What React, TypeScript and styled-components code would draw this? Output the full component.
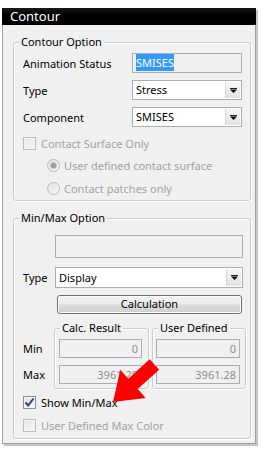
import React from 'react'
import styled, { createGlobalStyle } from 'styled-components'


const PANEL_BG = '#f0f0f0'
const FIELD_BORDER = '#abadb3'
const DISABLED_TEXT = '#a2a2a2'


const GlobalStyle = createGlobalStyle`
  html, body {
    margin: 0;
    padding: 0;
    background: #fff;
  }
  body {
    font-family: "Noto Sans", "Open Sans", sans-serif;
    font-size: 11px;
    color: #000;
  }
`


const Page = styled.div`
  position: relative;
  width: 261px;
  height: 451px;
  padding: 8px 0 0 2px;
  box-sizing: border-box;
  overflow: hidden;
`

const Window = styled.div`
  width: 254px;
  box-sizing: border-box;
  border: 1px solid #9aa0a6;
  border-top: none;
  box-shadow: 2px 2px 1px rgba(0, 0, 0, 0.22);
`

const TitleBar = styled.div`
  height: 17px;
  margin: 0 -1px;
  padding-left: 8px;
  background: linear-gradient(#1a1a1a, #000 40%, #000);
  color: #fff;
  font-size: 13px;
  line-height: 17px;
`

const Body = styled.div`
  display: flex;
  flex-direction: column;
  gap: 17px;
  padding: 17px 4px 4px 10px;
  background: ${PANEL_BG};
`


const Group = styled.div<{ $padding: string }>`
  position: relative;
  display: flex;
  flex-direction: column;
  padding: ${p => p.$padding};
  border: 1px solid #c3ccd4;
  border-radius: 3px;
  box-shadow: inset 1px 1px 0 #fff, 1px 1px 0 #fff;
`

const Legend = styled.span`
  position: absolute;
  top: -9px;
  left: 5px;
  padding: 0 2px;
  background: ${PANEL_BG};
  line-height: 16px;
  white-space: nowrap;
`


const FormRow = styled.div<{ $cols: string, $height: number, $gap?: number }>`
  display: grid;
  grid-template-columns: ${p => p.$cols};
  align-items: center;
  height: ${p => p.$height}px;
  margin-top: ${p => p.$gap || 0}px;
`

const Label = styled.span`
  white-space: nowrap;
`


const TextBox = styled.div<{ $height: number, $align?: string, $offset?: number }>`
  height: ${p => p.$height}px;
  margin-left: ${p => p.$offset || 0}px;
  box-sizing: border-box;
  padding: 0 3px;
  border: 1px solid ${FIELD_BORDER};
  background: ${PANEL_BG};
  color: #8c8c8c;
  line-height: ${p => p.$height - 2}px;
  text-align: ${p => p.$align || 'left'};
`

const Selected = styled.span`
  background: #3399ff;
  color: #fff;
  padding: 1px 0;
`


const ComboBox = styled.div<{ $height: number }>`
  display: flex;
  height: ${p => p.$height}px;
  box-sizing: border-box;
  border: 1px solid ${FIELD_BORDER};
  background: #fff;
`

const ComboValue = styled.span<{ $height: number }>`
  flex: 1;
  padding-left: 3px;
  line-height: ${p => p.$height - 2}px;
`

const ComboButton = styled.span`
  display: flex;
  align-items: center;
  justify-content: center;
  width: 14px;
  margin: 1px;
  border-left: 1px solid #d6d6d6;
  background: linear-gradient(#f6f6f6, #e2e2e2);
`

const Combo: React.FC<{ value: string, height: number }> = function ({ value, height }) {
  return (
    <ComboBox $height={height}>
      <ComboValue $height={height}>{value}</ComboValue>
      <ComboButton>
        <svg width="7" height="5" viewBox="0 0 7 5">
          <rect x="0" y="0" width="7" height="1" fill="#222" />
          <polygon points="0,1.5 7,1.5 3.5,5" fill="#000" />
        </svg>
      </ComboButton>
    </ComboBox>
  )
}


const CheckRow = styled.div<{ $indent?: number, $gap?: number, $disabled?: boolean }>`
  display: flex;
  align-items: center;
  height: 16px;
  margin-top: ${p => p.$gap || 0}px;
  padding-left: ${p => p.$indent || 0}px;
  color: ${p => p.$disabled ? DISABLED_TEXT : '#000'};
  white-space: nowrap;
`

const CheckBox = styled.span<{ $disabled?: boolean }>`
  display: flex;
  align-items: center;
  justify-content: center;
  width: 13px;
  height: 13px;
  margin-right: 5px;
  box-sizing: border-box;
  border: 1px solid ${p => p.$disabled ? '#bcbcbc' : '#8e8f8f'};
  background: ${p => p.$disabled
    ? 'linear-gradient(135deg, #e6e6e6, #f7f7f7)'
    : 'linear-gradient(135deg, #dcdcdc, #fdfdfd)'};
  box-shadow: inset 0 0 0 1px ${p => p.$disabled ? '#f2f2f2' : '#f4f4f4'};
`

const Radio = styled.span<{ $on?: boolean }>`
  display: flex;
  align-items: center;
  justify-content: center;
  width: 13px;
  height: 13px;
  margin-right: 4px;
  box-sizing: border-box;
  border: 1px solid #b9b9b9;
  border-radius: 50%;
  background: linear-gradient(135deg, #e4e4e4, #f8f8f8);

  &::after {
    content: '';
    display: ${p => p.$on ? 'block' : 'none'};
    width: 5px;
    height: 5px;
    border-radius: 50%;
    background: #9a9a9a;
    box-shadow: 0 0 0 1px #c8c8c8;
  }
`


const Button = styled.div`
  height: 19px;
  margin: 7px 1px 0 34px;
  box-sizing: border-box;
  border: 1px solid #707070;
  border-radius: 3px;
  background: linear-gradient(#f2f2f2 0%, #ebebeb 48%, #dddddd 52%, #cfcfcf 100%);
  box-shadow: inset 0 0 0 1px #fcfcfc;
  text-align: center;
  line-height: 16px;
`


const ResultRow = styled.div`
  display: grid;
  grid-template-columns: 28px 95px 94px;
  column-gap: 3px;
  margin-top: 14px;
`

const LabelColumn = styled.div`
  display: flex;
  flex-direction: column;
  gap: 7px;
  padding-top: 11px;

  > span {
    line-height: 19px;
  }
`

const SubGroup = styled(Group)`
  gap: 7px;
`


const Arrow = styled.svg`
  position: absolute;
  left: 100px;
  top: 355px;
`


const App: React.FC = function () {
  return (
    <Page>
      <GlobalStyle />
      <Window>
        <TitleBar>Contour</TitleBar>
        <Body>

          <Group $padding="10px 8px 4px 9px">
            <Legend>Contour Option</Legend>
            <FormRow $cols="109px 110px" $height={20}>
              <Label>Animation Status</Label>
              <TextBox $height={20}><Selected>SMISES</Selected></TextBox>
            </FormRow>
            <FormRow $cols="109px 110px" $height={20} $gap={7}>
              <Label>Type</Label>
              <Combo value="Stress" height={20} />
            </FormRow>
            <FormRow $cols="109px 110px" $height={20} $gap={7}>
              <Label>Component</Label>
              <Combo value="SMISES" height={20} />
            </FormRow>
            <CheckRow $gap={8} $disabled>
              <CheckBox $disabled />
              Contact Surface Only
            </CheckRow>
            <CheckRow $gap={6} $indent={24} $disabled>
              <Radio $on />
              User defined contact surface
            </CheckRow>
            <CheckRow $gap={7} $indent={24} $disabled>
              <Radio />
              Contact patches only
            </CheckRow>
          </Group>

          <Group $padding="16px 7px 5px 9px">
            <Legend>Min/Max Option</Legend>
            <TextBox $height={23} $offset={32} />
            <FormRow $cols="32px 188px" $height={21} $gap={9}>
              <Label>Type</Label>
              <Combo value="Display" height={21} />
            </FormRow>
            <Button>Calculation</Button>

            <ResultRow>
              <LabelColumn>
                <span>Min</span>
                <span>Max</span>
              </LabelColumn>
              <SubGroup $padding="10px 6px 4px 4px">
                <Legend>Calc. Result</Legend>
                <TextBox $height={19} $align="right">0</TextBox>
                <TextBox $height={19} $align="right">3961.28</TextBox>
              </SubGroup>
              <SubGroup $padding="10px 5px 4px 3px">
                <Legend>User Defined</Legend>
                <TextBox $height={19} $align="right">0</TextBox>
                <TextBox $height={19} $align="right">3961.28</TextBox>
              </SubGroup>
            </ResultRow>

            <CheckRow $gap={5}>
              <CheckBox>
                <svg width="11" height="11" viewBox="0 0 11 11">
                  <path d="M1.5 5.5 L4.2 8.5 L9.5 1.5" fill="none" stroke="#23409a" strokeWidth="2" />
                </svg>
              </CheckBox>
              Show Min/Max
            </CheckRow>
            <CheckRow $gap={7} $disabled>
              <CheckBox $disabled />
              User Defined Max Color
            </CheckRow>
          </Group>

        </Body>
      </Window>

      <Arrow width="66" height="52" viewBox="100 355 66 52">
        <polygon
          points="113,402 145.7,398 137.7,389.1 159.1,369.7 149.7,359.3 128.3,378.7 120.3,369.8"
          fill="#ff0000" />
      </Arrow>
    </Page>
  )
}


export default App
